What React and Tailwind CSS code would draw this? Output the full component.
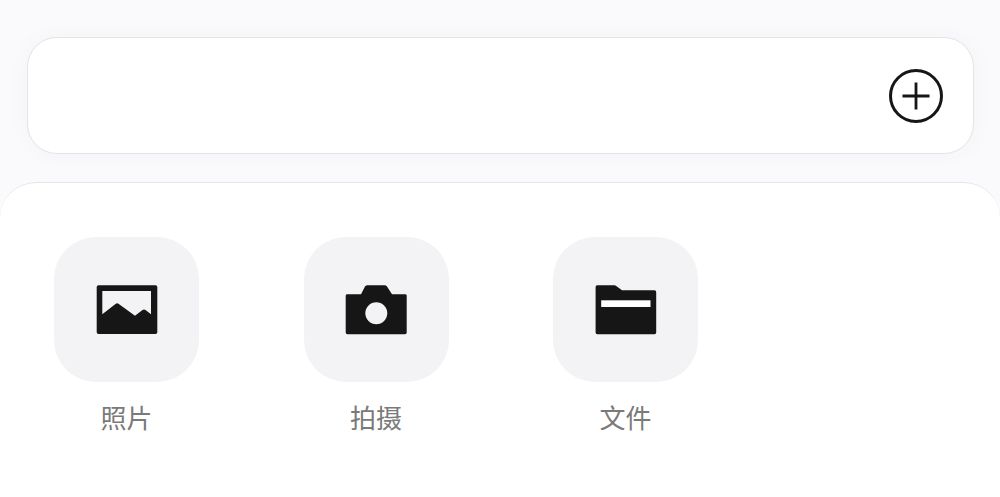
function ImageIcon() {
  return (
    <svg width="62" height="50" viewBox="0 0 62 50" className="block">
      <path fillRule="evenodd" fill="#161617" d="M2.5 .3H59.5A1.8 1.8 0 0 1 61.3 2.1V47.2A1.8 1.8 0 0 1 59.5 49H2.5A1.8 1.8 0 0 1 .7 47.2V2.1A1.8 1.8 0 0 1 2.5 .3ZM6.3 6V29.3L19.8 18.8Q21.3 17.8 22.8 18.9L39 30.7L46.5 24.9Q48 23.9 49.5 24.9L55 29.3V6Z" />
    </svg>
  );
}

function CameraIcon() {
  return (
    <svg width="62" height="50" viewBox="0 0 62 50" className="block">
      <path fillRule="evenodd" fill="#161617" d="M22.5 .3H39.5Q41 .3 42 1.5L47 9.3H60A1.5 1.5 0 0 1 61.7 11V47.5A1.7 1.7 0 0 1 60 49.2H2.4A1.7 1.7 0 0 1 .7 47.5V11A1.5 1.5 0 0 1 2.4 9.3H16L20 1.5Q21 .3 22.5 .3ZM31.3 17.3A11 11 0 1 0 31.3 39.3A11 11 0 1 0 31.3 17.3Z" />
    </svg>
  );
}

function FolderIcon() {
  return (
    <svg width="62" height="50" viewBox="0 0 62 50" className="block">
      <path fill="#161617" d="M2.3 .3H19.5Q20.5 .3 21.2 1L27 5.3H59.5A1.7 1.7 0 0 1 61.2 7V47.5A1.7 1.7 0 0 1 59.5 49.2H2.3A1.7 1.7 0 0 1 .6 47.5V2A1.7 1.7 0 0 1 2.3 .3Z" />
      <rect x="6.2" y="15.3" width="49.3" height="6.7" fill="#ffffff" />
    </svg>
  );
}

function PlusIcon() {
  return (
    <svg width="56" height="56" viewBox="0 0 56 56" className="block">
      <circle cx="28" cy="28" r="25.5" fill="none" stroke="#161616" strokeWidth="3" />
      <path d="M14.5 28H41.5M28 14.5V41.5" fill="none" stroke="#161616" strokeWidth="2.8" />
    </svg>
  );
}

function Tile({ label, children }) {
  return (
    <div className="flex w-[145px] flex-col items-center">
      <div className="flex h-[145px] w-[145px] items-center justify-center rounded-[42px] bg-[#f3f3f5]">
        {children}
      </div>
      <div className="mt-[17px] text-[26px] leading-[36px] text-[#7a7a7a] [font-family:'Noto_Sans_CJK_SC',sans-serif]">
        {label}
      </div>
    </div>
  );
}

export default function App() {
  return (
    <div className="flex h-[497px] w-[1000px] flex-col overflow-hidden bg-[#fafafc] pt-[37px]">
      <div className="ml-[27px] mr-[26px] flex h-[117px] items-center justify-end rounded-[30px] border border-[#e4e4e6] bg-white pr-[29px] shadow-[0_0_24px_rgba(0,0,0,0.03)]">
        <PlusIcon />
      </div>
      <div className="mt-[28px] flex flex-1 gap-[104.5px] rounded-t-[36px] border-t border-[#e6e6e8] bg-white pl-[54px] pt-[54px]">
        <Tile label="照片"><ImageIcon /></Tile>
        <Tile label="拍摄"><CameraIcon /></Tile>
        <Tile label="文件"><FolderIcon /></Tile>
      </div>
    </div>
  );
}
